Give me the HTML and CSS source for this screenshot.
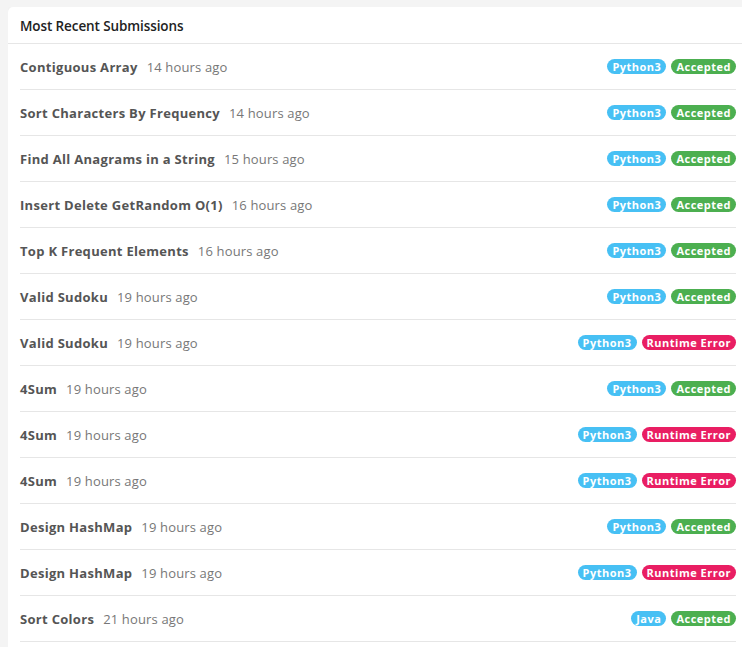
FILE: index.html
```html
<!DOCTYPE html>
<html>
<head>
<meta charset="utf-8">
<link rel="stylesheet" href="styles.css">
</head>
<body>
<div class="card">
  <div class="card-header">Most Recent Submissions</div>
  <ul class="list">
    <li class="row"><span class="title">Contiguous Array</span><span class="time">14 hours ago</span><span class="badges"><span class="badge lang">Python3</span><span class="badge ok">Accepted</span></span></li>
    <li class="row"><span class="title">Sort Characters By Frequency</span><span class="time">14 hours ago</span><span class="badges"><span class="badge lang">Python3</span><span class="badge ok">Accepted</span></span></li>
    <li class="row"><span class="title">Find All Anagrams in a String</span><span class="time">15 hours ago</span><span class="badges"><span class="badge lang">Python3</span><span class="badge ok">Accepted</span></span></li>
    <li class="row"><span class="title">Insert Delete GetRandom O(1)</span><span class="time">16 hours ago</span><span class="badges"><span class="badge lang">Python3</span><span class="badge ok">Accepted</span></span></li>
    <li class="row"><span class="title">Top K Frequent Elements</span><span class="time">16 hours ago</span><span class="badges"><span class="badge lang">Python3</span><span class="badge ok">Accepted</span></span></li>
    <li class="row"><span class="title">Valid Sudoku</span><span class="time">19 hours ago</span><span class="badges"><span class="badge lang">Python3</span><span class="badge ok">Accepted</span></span></li>
    <li class="row"><span class="title">Valid Sudoku</span><span class="time">19 hours ago</span><span class="badges"><span class="badge lang">Python3</span><span class="badge err">Runtime Error</span></span></li>
    <li class="row"><span class="title">4Sum</span><span class="time">19 hours ago</span><span class="badges"><span class="badge lang">Python3</span><span class="badge ok">Accepted</span></span></li>
    <li class="row"><span class="title">4Sum</span><span class="time">19 hours ago</span><span class="badges"><span class="badge lang">Python3</span><span class="badge err">Runtime Error</span></span></li>
    <li class="row"><span class="title">4Sum</span><span class="time">19 hours ago</span><span class="badges"><span class="badge lang">Python3</span><span class="badge err">Runtime Error</span></span></li>
    <li class="row"><span class="title">Design HashMap</span><span class="time">19 hours ago</span><span class="badges"><span class="badge lang">Python3</span><span class="badge ok">Accepted</span></span></li>
    <li class="row"><span class="title">Design HashMap</span><span class="time">19 hours ago</span><span class="badges"><span class="badge lang">Python3</span><span class="badge err">Runtime Error</span></span></li>
    <li class="row"><span class="title">Sort Colors</span><span class="time">21 hours ago</span><span class="badges"><span class="badge lang">Java</span><span class="badge ok">Accepted</span></span></li>
  </ul>
</div>
</body>
</html>
```
FILE: styles.css
```css
html, body {
  overflow: hidden;
}
body {
  margin: 7px 0 0 8px;
  background: #f4f4f4;
  font-family: "Open Sans", "DejaVu Sans", sans-serif;
}
.card {
  width: 740px;
  padding-bottom: 30px;
  background: #fff;
  border-radius: 5px;
  box-shadow: 0 1px 3px rgba(0, 0, 0, 0.08);
}
.card-header {
  height: 37px;
  box-sizing: border-box;
  padding: 1px 12px 0;
  display: flex;
  align-items: center;
  border-bottom: 1px solid #e6e6e6;
  font-size: 13.5px;
  font-weight: 600;
  color: #222;
  letter-spacing: -0.1px;
}
.list {
  list-style: none;
  margin: 0;
  padding: 0 12px;
}
.row {
  height: 46px;
  box-sizing: border-box;
  display: flex;
  align-items: center;
  border-bottom: 1px solid #e6e6e6;
}
.title {
  font-size: 13px;
  font-weight: 700;
  color: #555;
  letter-spacing: 0.3px;
}
.time {
  margin-left: 9px;
  font-size: 13px;
  color: #777;
  letter-spacing: 0.15px;
}
.badges {
  margin-left: auto;
  display: flex;
  gap: 5px;
}
.badge {
  height: 15px;
  padding: 0 5px;
  border-radius: 8px;
  display: flex;
  align-items: center;
  font-size: 11px;
  font-weight: 700;
  color: #fff;
  letter-spacing: 0.5px;
}
.lang { background: #47c0f4; }
.ok { background: #4caf50; }
.err { background: #e91e63; }
```
